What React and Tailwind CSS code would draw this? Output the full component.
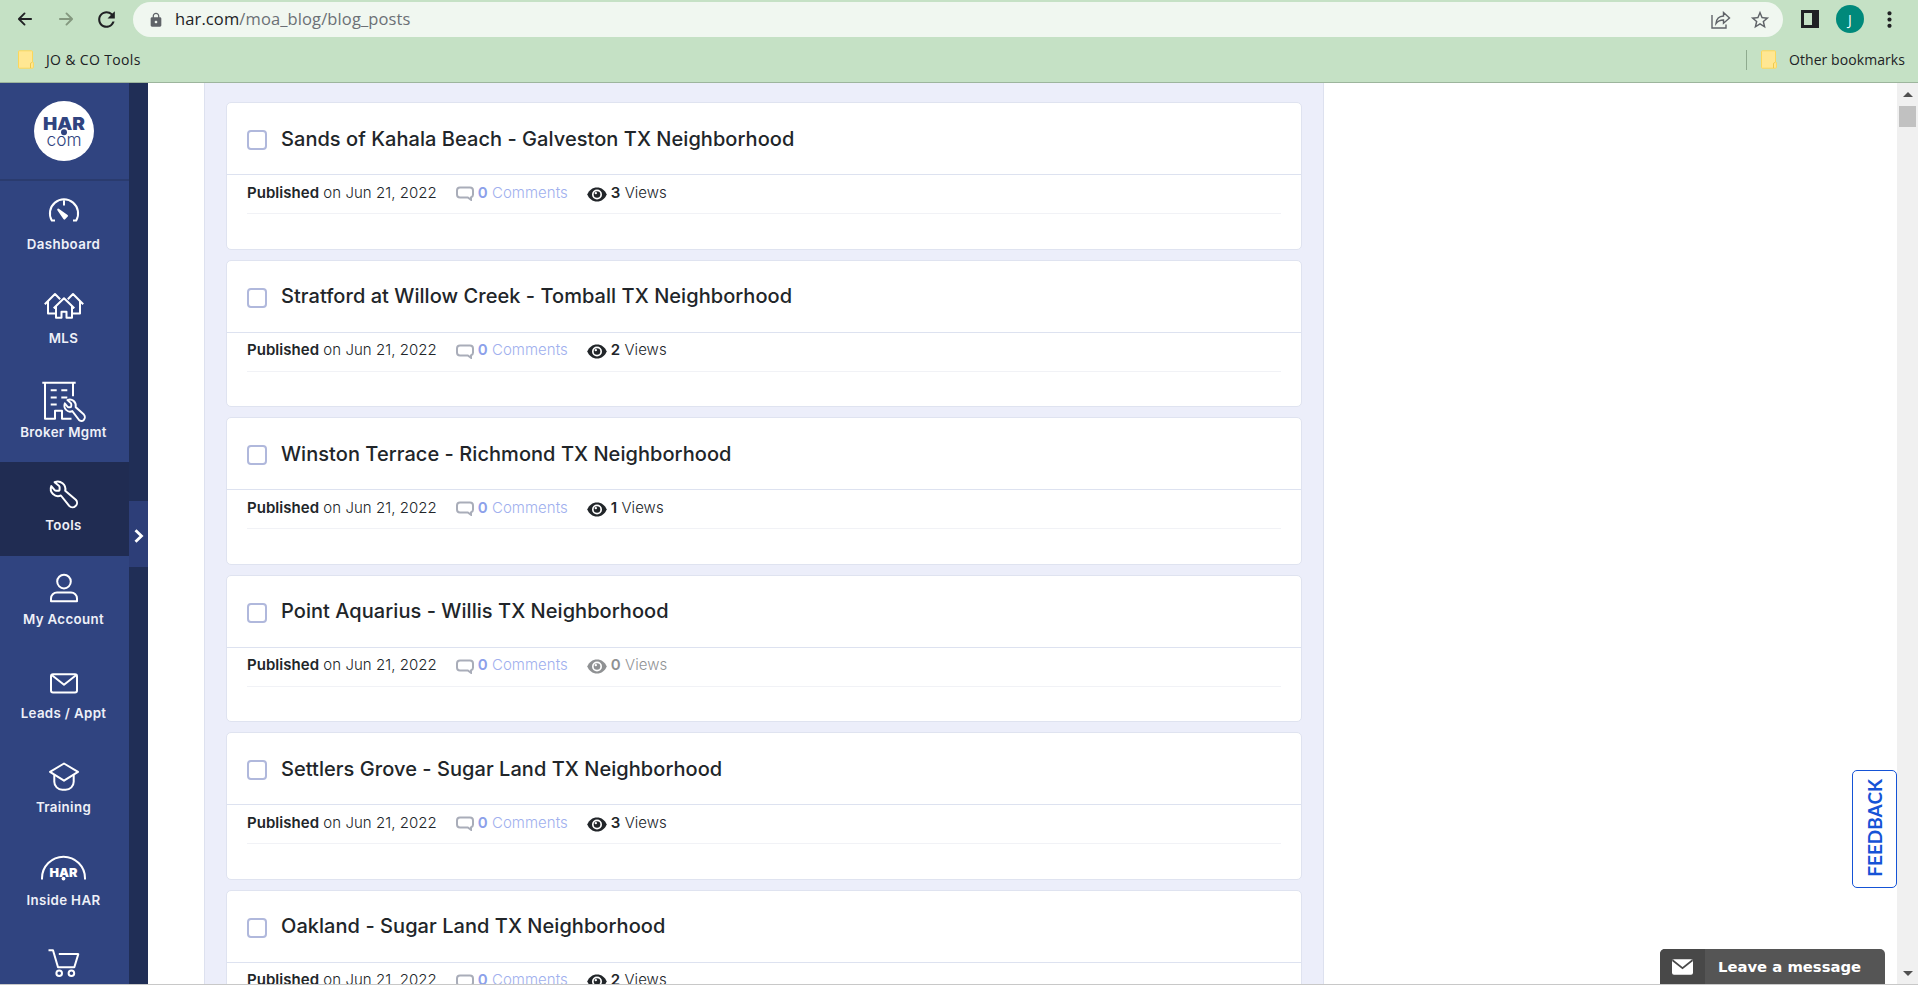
import React from "react";
import { IoArrowBack, IoArrowForward } from "react-icons/io5";
import { MdLock, MdRefresh, MdStarBorder, MdMoreVert } from "react-icons/md";

const posts = [
  { title: "Sands of Kahala Beach - Galveston TX Neighborhood", views: 3 },
  { title: "Stratford at Willow Creek - Tomball TX Neighborhood", views: 2 },
  { title: "Winston Terrace - Richmond TX Neighborhood", views: 1 },
  { title: "Point Aquarius - Willis TX Neighborhood", views: 0 },
  { title: "Settlers Grove - Sugar Land TX Neighborhood", views: 3 },
  { title: "Oakland - Sugar Land TX Neighborhood", views: 2 },
];

const wrench =
  "M14.6 20.2l4.3 3.6q.7.6.7 1.5v1.9q0 1.6-1.6 1.6h-1.8q-.9 0-1.5-.7l-3.4-4a7.3 7.3 0 0 0 9.6 9.4l8.3 10.4a4.5 4.5 0 0 0 6.6-6.2l-10.6-9a7.6 7.6 0 0 0-10.6-8.5z";

const navItems = [
  {
    label: "Dashboard",
    icon: (
      <>
        <path d="M15 39.5h-3.2a14.1 14.1 0 1 1 24.4 0H33M24 19.5v5" />
        <path d="M18.2 28.6l8.8 6.2-2.6 2.8z" fill="currentColor" />
      </>
    ),
  },
  {
    label: "MLS",
    icon: (
      <>
        <path d="M13.7 33.3L24 23.3l10.3 10M16 31.5v11.2h5.5v-6h5v6H32V31.5" />
        <path d="M4.8 29.3L15 19l5.2 5.3M8 26.8v11.7h7.5M43.2 29.3L33 19l-5.2 5.3M40 26.8v11.7h-7.5" />
      </>
    ),
  },
  {
    label: "Broker Mgmt",
    icon: (
      <>
        <path d="M2.3 13.8h33.4M5 13.8v36h10v-8h7v8h9.5M33 13.8v13.4" />
        <path d="M10.7 21.3h6M21.3 21.3h6M10.7 28.5h6M21.3 28.5h6M10.7 35.5h6" />
        <g transform="translate(16 14.3) scale(.78 .83)">
          <path d={wrench} strokeWidth="2.4" />
        </g>
      </>
    ),
  },
  { label: "Tools", active: true, icon: <path d={wrench} /> },
  {
    label: "My Account",
    icon: (
      <>
        <circle cx="24" cy="25.6" r="6.8" />
        <path d="M11 45.2v-2.7a6 6 0 0 1 6-6h14a6 6 0 0 1 6 6v2.7z" />
      </>
    ),
  },
  {
    label: "Leads / Appt",
    icon: (
      <>
        <rect x="11" y="24.2" width="26" height="18.2" rx="2" />
        <path d="M12 25.2l12 9.6 12-9.6" />
      </>
    ),
  },
  {
    label: "Training",
    icon: (
      <>
        <path d="M24 19.5l14 8.4-14 8.8-14-8.8z" />
        <path d="M14.3 30.5v7.2a8 8 0 0 0 8 8h3.4a8 8 0 0 0 8-8v-7.2" />
      </>
    ),
  },
  {
    label: "Inside HAR",
    icon: (
      <>
        <path d="M2 42.4v-1.2a21.5 21.5 0 0 1 43 0v1.2" />
        <text
          x="23.5"
          y="39.8"
          textAnchor="middle"
          textLength="28"
          lengthAdjust="spacingAndGlyphs"
          fill="currentColor"
          stroke="none"
          className="font-['Inter'] text-[12px] font-black"
        >
          HAR
        </text>
        <circle cx="23.5" cy="41.6" r="1.9" fill="currentColor" stroke="none" />
      </>
    ),
  },
  {
    label: "",
    icon: (
      <>
        <path d="M8.5 19.3H13l5 17h16.3l4-13.2H18.8" />
        <circle cx="19.2" cy="42.3" r="2.8" />
        <circle cx="31.4" cy="42.3" r="2.8" />
      </>
    ),
  },
];

function Folder() {
  return (
    <svg width="16" height="19" viewBox="0 0 16 19" fill="#ffe793" stroke="#fbd75b">
      <path d="M1.2.8h12.6q.7 0 .7.8v10.2l.9.7v4.7q0 1-.9 1H1.2q-.7 0-.7-.8V1.6q0-.8.7-.8z" />
      <path d="M12.5 18v-4.2q0-1 1-1.2l1-.6" fill="none" stroke="#efc94a" />
    </svg>
  );
}

function BrowserBar() {
  return (
    <header className="h-[83px] shrink-0 border-b border-[#9db59d] bg-[#c5e1c5] font-['Open_Sans',sans-serif] text-[#202124]">
      <div className="flex h-[38px] items-center pl-[15px]">
        <IoArrowBack className="size-[20px]" />
        <IoArrowForward className="ml-[21px] size-[20px] text-[#84987f]" />
        <MdRefresh className="ml-[18px] size-[25px]" />
        <div className="mt-px ml-[14px] flex h-[35px] w-[1650px] items-center rounded-full bg-[#f0f7f0] pr-[12px] pl-[15px]">
          <MdLock className="size-[16px] text-[#5f6368]" />
          <span className="ml-[11px] grow text-[16.5px] tracking-[0.12px] text-[#6b7075]">
            <span className="text-[#202124]">har.com</span>/moa_blog/blog_posts
          </span>
          <svg width="20" height="18" viewBox="0 0 20 18" fill="none" stroke="#5f6368" strokeWidth="1.4">
            <path d="M1 4v13h14v-3.5M5 12.5c.5-5 3-7.3 7.5-7.5V1.5L18.5 7l-6 5.3V9c-3.3 0-5.5.8-7.5 3.5z" />
          </svg>
          <MdStarBorder className="ml-[18px] size-[22px] text-[#5f6368]" />
        </div>
        <div className="ml-[18px] size-[18px] border-[3px] border-r-[7px] border-[#202124]" />
        <div className="ml-[17px] flex size-[28px] items-center justify-center rounded-full bg-[#00897b] text-[14px] text-white">
          J
        </div>
        <MdMoreVert className="ml-[13px] size-[25px]" />
      </div>
      <div className="flex h-[43px] items-center pr-[13px] pl-[18px] text-[14px]">
        <Folder />
        <span className="ml-[12px] tracking-[0.35px]">JO &amp; CO Tools</span>
        <div className="mr-[14px] ml-auto h-[20px] w-px bg-[#8fab8f]" />
        <Folder />
        <span className="ml-[12px] tracking-[0.07px]">Other bookmarks</span>
      </div>
    </header>
  );
}

function Sidebar() {
  return (
    <nav className="flex h-full w-[148px] shrink-0 overflow-hidden text-white">
      <div className="w-[129px] bg-[#304480]">
        <div className="flex h-[98px] justify-center border-b-2 border-[#2a3b6e] pt-[18px] pr-px">
          <svg width="60" height="60" viewBox="0 0 60 60">
            <circle cx="30" cy="30" r="30" fill="#fff" />
            <text
              x="30"
              y="28.8"
              textAnchor="middle"
              textLength="42"
              lengthAdjust="spacingAndGlyphs"
              fill="#304480"
              className="font-['Inter'] text-[17px] font-black"
            >
              HAR
            </text>
            <circle cx="30" cy="31.3" r="4.3" fill="#fff" />
            <text
              x="30"
              y="44.7"
              textAnchor="middle"
              textLength="35"
              lengthAdjust="spacingAndGlyphs"
              fill="#304480"
              className="font-['Inter'] text-[18px] font-light"
            >
              com
            </text>
            <circle cx="30" cy="31.3" r="3" fill="#304480" />
          </svg>
        </div>
        {navItems.map((item, i) => (
          <div
            key={i}
            className={`flex h-[93.75px] flex-col items-center ${item.active ? "bg-[#202c52]" : ""}`}
          >
            <svg
              width="49"
              height="55"
              viewBox="0 0 49 55"
              fill="none"
              stroke="currentColor"
              strokeWidth="2"
              strokeLinejoin="round"
              className="shrink-0"
            >
              {item.icon}
            </svg>
            <span className="pr-[2px] text-[13.3px] leading-[16px] font-semibold tracking-[0.35px] whitespace-nowrap text-[#eef0f8]">
              {item.label}
            </span>
          </div>
        ))}
      </div>
      <div className="w-[19px] bg-[#202e56] pt-[418px]">
        <div className="flex h-[66px] items-center justify-center bg-[#2d3e78] pt-[4px]">
          <svg width="10" height="14" viewBox="0 0 10 14" fill="none" stroke="#fff" strokeWidth="2.8">
            <path d="M1.5 1.2L7.5 7l-6 5.8" />
          </svg>
        </div>
      </div>
    </nav>
  );
}

function PostCard({ post }) {
  return (
    <article className="h-[147.5px] shrink-0 rounded-[5px] border border-[#dfe3f0] bg-white">
      <div className="flex h-[72px] items-center border-b border-[#dde2f0] pl-[20px]">
        <div className="mt-[3px] size-[20px] rounded-[4px] border-2 border-[#b0b8dc]" />
        <h2 className="ml-[14px] text-[20px] font-medium tracking-[0.05px] text-[#212529]">{post.title}</h2>
      </div>
      <div className="mx-[20px] flex h-[39px] items-center border-b border-[#f1f2f6] pb-[2px] text-[15px] font-light tracking-[0.04px] text-[#212529]">
        <span>
          <b className="font-semibold">Published</b> on Jun 21, 2022
        </span>
        <svg
          width="18"
          height="15"
          viewBox="0 0 18 15"
          fill="none"
          stroke="#a9adb9"
          strokeWidth="2"
          className="mt-px ml-[19px]"
        >
          <path d="M4 1.5h10a3 3 0 0 1 3 3v4a3 3 0 0 1-2 2.9v2.4l-3.2-2.3H4a3 3 0 0 1-3-3v-4a3 3 0 0 1 3-3z" />
        </svg>
        <span className="ml-[4px] text-[#a0b0ee]">
          <b className="font-semibold text-[#8ca0ea]">0</b> Comments
        </span>
        <div className={`ml-[19px] flex items-center ${post.views ? "" : "opacity-50"}`}>
          <svg width="20" height="15" viewBox="0 0 20 15" fill="currentColor" className="mt-[2px]">
            <path d="M10 .5C5.5.5 2 3.2.3 7.5 2 11.8 5.5 14.5 10 14.5s8-2.7 9.7-7C18 3.2 14.5.5 10 .5z" />
            <circle cx="10" cy="7.5" r="5" fill="#fff" />
            <circle cx="10" cy="7.5" r="3.3" />
            <circle cx="8.8" cy="6.1" r="1.2" fill="#fff" />
          </svg>
          <span className="ml-[4px]">
            <b className="font-semibold">{post.views}</b> Views
          </span>
        </div>
      </div>
    </article>
  );
}

function Scrollbar() {
  return (
    <div className="flex w-[21px] shrink-0 flex-col items-center bg-[#f0f0f0]">
      <div className="mt-[9px] border-x-[5px] border-b-[5px] border-x-transparent border-b-[#505050]" />
      <div className="mt-[9px] h-[21px] w-[17px] bg-[#c1c1c1]" />
      <div className="mt-auto mb-[8px] border-x-[5px] border-t-[5px] border-x-transparent border-t-[#505050]" />
    </div>
  );
}

function App() {
  return (
    <div className="relative flex h-[985px] w-full flex-col overflow-hidden border-b border-[#c8c8c8] bg-white font-['Inter',sans-serif]">
      <BrowserBar />
      <div className="flex min-h-0 grow">
        <Sidebar />
        <main className="grow overflow-hidden pl-[56px]">
          <div className="flex h-full w-[1120px] flex-col gap-[10px] border-x border-[#dde1ef] bg-[#eceefa] px-[21px] pt-[19px]">
            {posts.map((post) => (
              <PostCard key={post.title} post={post} />
            ))}
          </div>
        </main>
        <Scrollbar />
      </div>

      {/* floating widgets */}
      <button className="absolute top-[770px] right-[21px] flex h-[118px] w-[45px] items-center justify-center rounded-[5px] border border-[#1553d6] bg-white pb-[3px] pl-[2px]">
        <span className="rotate-180 font-['Lato',sans-serif] text-[19px] font-bold text-[#1553d6] [writing-mode:vertical-rl]">
          FEEDBACK
        </span>
      </button>
      <div className="absolute right-[33px] bottom-0 flex h-[35px] w-[225px] overflow-hidden rounded-t-[5px] bg-[#555]">
        <div className="flex w-[45px] items-center justify-center bg-[#484848]">
          <svg width="21" height="16" viewBox="0 0 21 16">
            <rect width="21" height="15.5" y=".3" rx="2" fill="#fff" />
            <path d="M.5 1.2l10 8 10-8" fill="none" stroke="#484848" strokeWidth="1.8" />
          </svg>
        </div>
        <span className="pt-[8px] pl-[13px] font-['DejaVu_Sans',sans-serif] text-[14.8px] leading-[20px] font-bold whitespace-nowrap text-white">
          Leave a message
        </span>
      </div>
    </div>
  );
}

export default App;
